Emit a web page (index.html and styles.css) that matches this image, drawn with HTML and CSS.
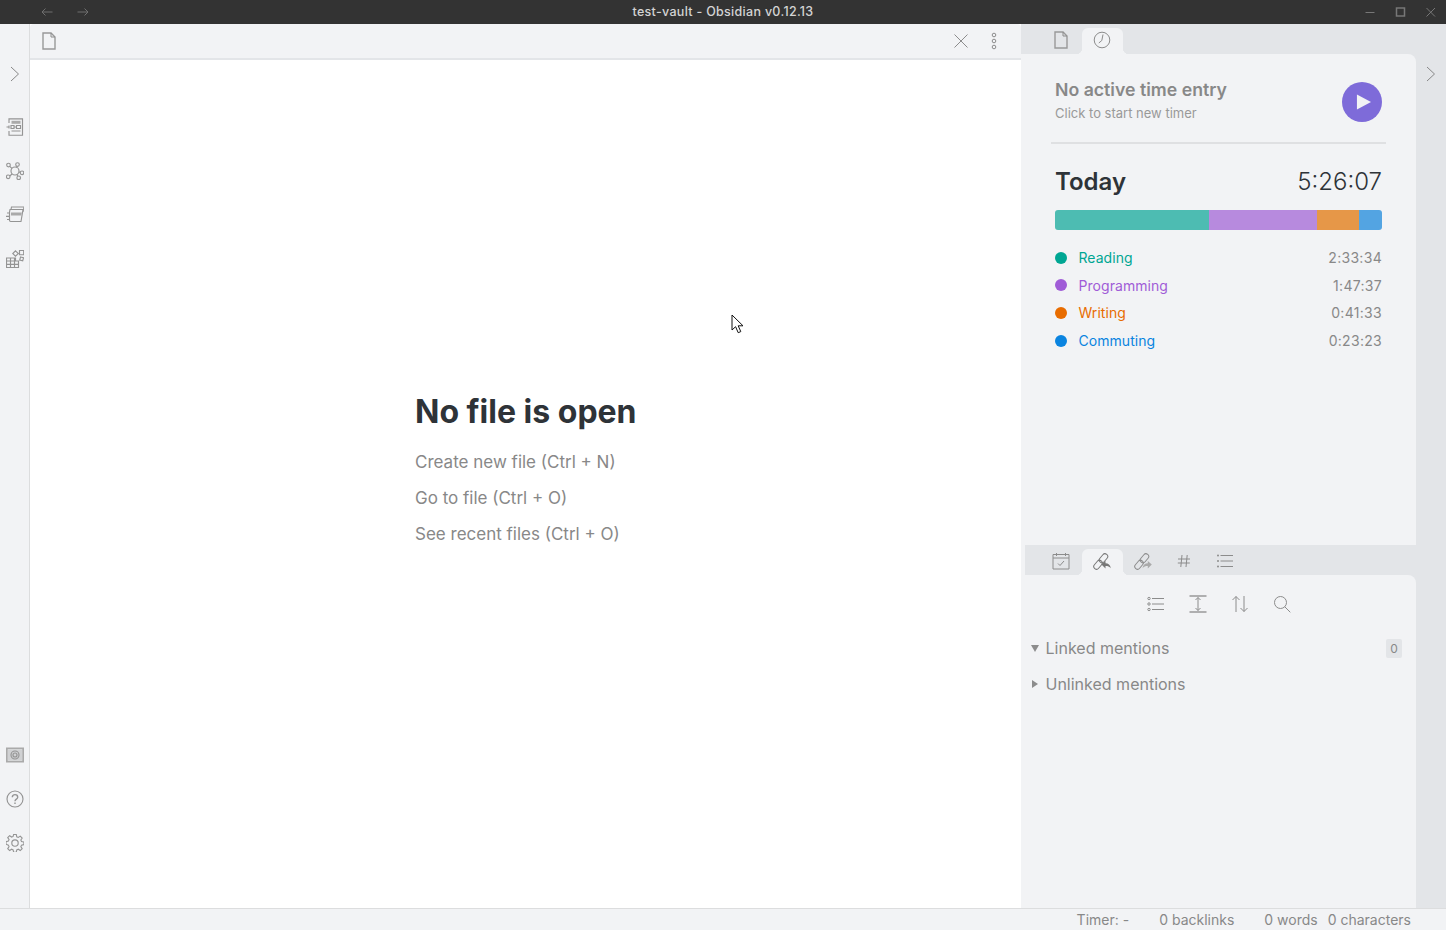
FILE: index.html
```html
<!DOCTYPE html>
<html lang="en">
<head>
    <meta charset="UTF-8">
    <title>test-vault - Obsidian v0.12.13</title>
    <link rel="stylesheet" href="styles.css">
</head>
<body>
<div class="app">
    <div class="titlebar">
        <div class="nav-arrows">
            <svg class="arrow-icon" viewBox="0 0 12 10"><path d="M11.500 5H1M4.500 1.500L1 5l3.500 3.500"/></svg>
            <svg class="arrow-icon" viewBox="0 0 12 10"><path d="M.500 5H11M7.500 1.500L11 5 7.500 8.500"/></svg>
        </div>
        <div class="window-title">test-vault - Obsidian v0.12.13</div>
        <div class="window-btns">
            <svg class="win-icon" viewBox="0 0 12 12"><path d="M.500 6.500h9"/></svg>
            <svg class="win-icon" viewBox="0 0 12 12"><path class="thick" d="M1.500 2h8v8h-8z"/></svg>
            <svg class="win-icon" viewBox="0 0 12 12"><path d="M1.500 2l8.500 8.500M10 2l-8.500 8.500"/></svg>
        </div>
    </div>

    <div class="workspace">
        <div class="ribbon">
            <svg class="ribbon-chevron" viewBox="0 0 18 18"><path d="M5 2l7.500 7L5 16"/></svg>
            <div class="ribbon-actions">
                <div class="ribbon-btn">
                    <svg class="icon" viewBox="0 0 18 18">
                        <path d="M3 5V.800h13.500v16.400H3V13"/>
                        <path class="solid" d="M5.500 2.800h9v3h-9z"/>
                        <path d="M.500 9h2.500M10.500 7.500h4v3h-4zM5 7.500h3v3H5zM3 7.500v3M8 9h2.500M5.500 13h9"/>
                    </svg>
                </div>
                <div class="ribbon-btn">
                    <svg class="icon" viewBox="0 0 18 18">
                        <circle cx="9" cy="9" r="4"/>
                        <circle cx="2.500" cy="3" r="1.800"/>
                        <circle cx="11.500" cy="2.500" r="1.800"/>
                        <circle cx="16" cy="10.800" r="1.800"/>
                        <circle cx="12.700" cy="15.800" r="1.800"/>
                        <circle cx="2.200" cy="14.800" r="1.800"/>
                        <path d="M3.700 4.300l2.500 2.300M11 4.300l-.7 1M14.300 10.400L13 10M11.800 14l-.8-1.700M3.700 14l2.400-2"/>
                    </svg>
                </div>
                <div class="ribbon-btn">
                    <svg class="icon" viewBox="0 0 18 18">
                        <path d="M5 3.500l.5-2.500H18l-1 5M3.500 6l.5-2.500h13L15 15.500H4.700a1.200 1.200 0 0 1-1.200-1.200z"/>
                        <path class="solid" d="M5 6.500h10.800l-.5 3H5z"/>
                        <path d="M1 7h2.500M0 10.300h3.500M1 13.500h2.500"/>
                    </svg>
                </div>
                <div class="ribbon-btn">
                    <svg class="icon" viewBox="0 0 18 18">
                        <path d="M.500 8h9v3h3v6.500H.500zM.500 11h12M.500 14.300h12M4.500 8v9.500M8.500 8v9.500"/>
                        <path d="M9.500 .8l2.800 2.700-2.800 2.800-2.700-2.800zM13.500 .5h4.200v4.200h-4.200zM14.500 7l3 .8-.8 3-3-.8z"/>
                    </svg>
                </div>
            </div>
            <div class="ribbon-actions ribbon-bottom">
                <div class="ribbon-btn">
                    <svg class="icon" viewBox="0 0 18 18">
                        <path class="solid" d="M0 1.500h18v15H0zM1.800 3.300v11.400h14.400V3.300z" fill-rule="evenodd"/>
                        <path class="pale" d="M1.800 3.300h14.400v11.400H1.800z"/>
                        <circle cx="9" cy="9" r="4"/>
                        <circle cx="9" cy="9" r="2"/>
                    </svg>
                </div>
                <div class="ribbon-btn">
                    <svg class="icon" viewBox="0 0 18 18">
                        <circle cx="9" cy="9" r="8"/>
                        <path class="bold" d="M6.300 7.200c0-3.500 5.400-3.500 5.400 0 0 2-2.700 1.800-2.700 4"/>
                        <path class="bold" d="M9 12.600v1.500"/>
                    </svg>
                </div>
                <div class="ribbon-btn">
                    <svg class="icon" viewBox="0 0 18 18">
                        <path d="M7.600 0h2.800l.5 2.500 1.600.7 2.100-1.400 2 2-1.400 2.100.7 1.600 2.500.5v2.800l-2.500.5-.7 1.600 1.400 2.100-2 2-2.100-1.400-1.600.7-.5 2.500H7.600l-.5-2.500-1.600-.7-2.100 1.400-2-2 1.400-2.100-.7-1.600L-.4 10.400V7.600l2.500-.5.7-1.600-1.400-2.100 2-2 2.100 1.400 1.600-.7z" transform="translate(.4 .4) scale(.95)"/>
                        <circle cx="9" cy="9" r="3.200"/>
                    </svg>
                </div>
            </div>
        </div>

        <div class="main">
            <div class="view-header">
                <svg class="icon file-icon" viewBox="0 0 16 18"><path class="thick" d="M2 1h8l4 4v12H2z"/><path d="M10 1v4h4"/></svg>
                <div class="view-actions">
                    <svg class="icon" viewBox="0 0 18 18"><path d="M2.500 2.500l13 13M15.500 2.500l-13 13"/></svg>
                    <svg class="icon" viewBox="0 0 18 18"><circle cx="9" cy="3" r="1.800"/><circle cx="9" cy="9" r="1.800"/><circle cx="9" cy="15" r="1.800"/></svg>
                </div>
            </div>
            <div class="empty-state">
                <div class="empty-box">
                    <h1 class="empty-title">No file is open</h1>
                    <div class="empty-action">Create new file (Ctrl + N)</div>
                    <div class="empty-action">Go to file (Ctrl + O)</div>
                    <div class="empty-action">See recent files (Ctrl + O)</div>
                </div>
            </div>
        </div>

        <div class="side-dock">
            <div class="side-panes">
                <div class="pane pane-top">
                    <div class="tab-strip">
                        <div class="tab">
                            <svg class="icon file-small" viewBox="0 0 16 18"><path class="thick" d="M2 1h8l4 4v12H2z"/><path d="M10 1v4h4"/></svg>
                        </div>
                        <div class="tab active">
                            <svg class="icon" viewBox="0 0 18 18"><circle cx="9" cy="9" r="7.800"/><path d="M10 3.500L8.800 9.500 5.800 12"/></svg>
                        </div>
                    </div>
                    <div class="pane-body timer-view">
                        <div class="timer-head">
                            <div class="timer-text">
                                <div class="timer-title">No active time entry</div>
                                <div class="timer-sub">Click to start new timer</div>
                            </div>
                            <div class="play-btn">
                                <svg class="play-icon" viewBox="0 0 16 16"><path d="M1 0l15 8-15 8z"/></svg>
                            </div>
                        </div>
                        <div class="today-row">
                            <div class="today-label">Today</div>
                            <div class="today-total">5:26:07</div>
                        </div>
                        <div class="stack-bar">
                            <div class="seg seg-reading" style="width: 47.09%"></div>
                            <div class="seg seg-programming" style="width: 33.00%"></div>
                            <div class="seg seg-writing" style="width: 12.74%"></div>
                            <div class="seg seg-commuting" style="width: 7.17%"></div>
                        </div>
                        <ul class="entry-list">
                            <li class="entry c-reading"><span class="dot"></span><span class="entry-name">Reading</span><span class="entry-time">2:33:34</span></li>
                            <li class="entry c-programming"><span class="dot"></span><span class="entry-name">Programming</span><span class="entry-time">1:47:37</span></li>
                            <li class="entry c-writing"><span class="dot"></span><span class="entry-name">Writing</span><span class="entry-time">0:41:33</span></li>
                            <li class="entry c-commuting"><span class="dot"></span><span class="entry-name">Commuting</span><span class="entry-time">0:23:23</span></li>
                        </ul>
                    </div>
                </div>

                <div class="pane pane-bottom">
                    <div class="tab-strip strip-inset">
                        <div class="tab">
                            <svg class="icon" viewBox="0 0 18 18"><path d="M1 2.500h16v14.500H1zM1 6h16M4.500 1v3M13.500 1v3M6 11.500l2 2 4-4.500"/></svg>
                        </div>
                        <div class="tab active">
                            <svg class="icon icon-dark" viewBox="0 0 18 18">
                                <rect x="0" y="10" width="10" height="5.500" rx="2.700" transform="rotate(-50 5 12.750)"/>
                                <rect x="5.500" y="3.500" width="10" height="5.500" rx="2.700" transform="rotate(-50 10.500 6.250)"/>
                                <path class="solid" d="M8.500 12.500l4-3.500v2.300c2.800 0 4.800 1.500 5.300 5-1.200-1.800-3-2.300-5.300-2.300V16.500z"/>
                            </svg>
                        </div>
                        <div class="tab">
                            <svg class="icon" viewBox="0 0 18 18">
                                <rect x="0" y="10" width="10" height="5.500" rx="2.700" transform="rotate(-50 5 12.750)"/>
                                <rect x="5.500" y="3.500" width="10" height="5.500" rx="2.700" transform="rotate(-50 10.500 6.250)"/>
                                <path class="solid" d="M17.800 12.500l-4-3.500v2.300c-2.800 0-4.800 1.500-5.300 5 1.200-1.800 3-2.300 5.300-2.300v2.500z"/>
                            </svg>
                        </div>
                        <div class="tab">
                            <svg class="icon" viewBox="0 0 18 18"><path d="M7 3l-1.200 12M12.200 3L11 15M3 7h12M2.800 11h12"/></svg>
                        </div>
                        <div class="tab">
                            <svg class="icon" viewBox="0 0 18 18"><path d="M4.500 3.500h12.500M4.500 9h12.500M4.500 14.500h12.500"/><circle class="dot-fill" cx="2" cy="3.500" r="1"/><circle class="dot-fill" cx="2" cy="9" r="1"/><circle class="dot-fill" cx="2" cy="14.500" r="1"/></svg>
                        </div>
                    </div>
                    <div class="pane-body backlinks">
                        <div class="bl-toolbar">
                            <svg class="icon" viewBox="0 0 18 18"><path d="M5 3.500h12M5 9h12M5 14.500h12"/><circle cx="2" cy="3.500" r="1.200"/><circle cx="2" cy="9" r="1.200"/><circle cx="2" cy="14.500" r="1.200"/></svg>
                            <svg class="icon" viewBox="0 0 18 18"><path class="thick" d="M.500 1h17M.500 17h17"/><path d="M9 2.500v13M6.500 5L9 2.500 11.500 5M6.500 13L9 15.500l2.500-2.500"/></svg>
                            <svg class="icon" viewBox="0 0 18 18"><path d="M5 17V1.500M1.500 5L5 1.500 8.500 5M13 1v15.500M9.500 13l3.500 3.500 3.500-3.500"/></svg>
                            <svg class="icon" viewBox="0 0 18 18"><circle cx="7.500" cy="7.500" r="6"/><path d="M11.800 11.800l5.500 5.500"/></svg>
                        </div>
                        <div class="bl-row">
                            <span class="caret caret-down"></span>
                            <span class="bl-name">Linked mentions</span>
                            <span class="bl-count">0</span>
                        </div>
                        <div class="bl-row">
                            <span class="caret caret-right"></span>
                            <span class="bl-name">Unlinked mentions</span>
                        </div>
                    </div>
                </div>
            </div>
            <div class="dock-edge">
                <svg class="ribbon-chevron" viewBox="0 0 18 18"><path d="M5 2l7.500 7L5 16"/></svg>
            </div>
        </div>
    </div>

    <div class="statusbar">
        <span class="status-item">Timer: -</span>
        <span class="status-item">0 backlinks</span>
        <span class="status-item">0 words</span>
        <span class="status-item status-tight">0 characters</span>
    </div>

    <svg class="cursor" viewBox="0 0 14 20"><path d="M1 1v15l3.600-3.300 2.600 6 2.600-1.100-2.600-5.800H12z"/></svg>
</div>
</body>
</html>
```

FILE: styles.css
```css
*{padding: 0;margin: 0;box-sizing: border-box;}
html, body{height: 100%;overflow: hidden;}
body{
    font-family: Inter, "Noto Sans", "Liberation Sans", sans-serif;
    color: #888;
    background: #f2f3f5;
}
ul{list-style-type: none;}
svg{display: block;flex: none;}

.app{
    position: relative;
    display: flex;
    flex-direction: column;
    height: 930px;
}

/* title bar */
.titlebar{
    display: flex;
    align-items: center;
    position: relative;
    height: 24px;
    flex: none;
    background: #333;
}
.nav-arrows{
    display: flex;
    gap: 24px;
    padding-left: 41px;
}
.arrow-icon{
    width: 12px;
    height: 10px;
    fill: none;
    stroke: #6f6f6f;
    stroke-width: 1;
}
.window-title{
    position: absolute;
    left: 0;
    right: 0;
    margin-top: -1px;
    text-align: center;
    font-size: 12.500px;
    font-weight: 500;
    letter-spacing: .3px;
    color: #d4d4d4;
}
.window-btns{
    display: flex;
    gap: 18px;
    margin-left: auto;
    padding-right: 9px;
}
.win-icon{
    width: 12px;
    height: 12px;
    fill: none;
    stroke: #777;
    stroke-width: 1;
}
.win-icon .thick{stroke-width: 1.500;}

/* shared icon look */
.icon{
    width: 18px;
    height: 18px;
    fill: none;
    stroke: #8c8c8c;
    stroke-width: 1;
}
.icon .thick{stroke-width: 1.400;stroke: #999;}
.icon .bold{stroke-width: 1.400;}
.icon .solid{fill: #aaa;stroke: none;}
.icon .pale{fill: #d0d1d3;stroke: none;}
.icon .dot-fill{fill: #8c8c8c;stroke: none;}
.icon-dark{stroke: #777;}
.icon-dark .solid{fill: #777;}

.workspace{
    display: flex;
    flex: 1;
    min-height: 0;
    background: #f2f3f5;
}

/* left ribbon */
.ribbon{
    display: flex;
    flex-direction: column;
    align-items: center;
    width: 30px;
    flex: none;
    padding: 41px 0 43px;
    border-right: 1px solid #dcddde;
}
.ribbon .icon{stroke: #949494;stroke-width: 1.150;}
.ribbon-chevron{
    width: 18px;
    height: 18px;
    fill: none;
    stroke: #888;
    stroke-width: 1;
}
.ribbon-actions{
    display: flex;
    flex-direction: column;
    margin-top: 22px;
}
.ribbon-bottom{margin-top: auto;}
.ribbon-btn{
    display: flex;
    align-items: center;
    justify-content: center;
    width: 29px;
    height: 44px;
}

/* main view */
.main{
    display: flex;
    flex-direction: column;
    width: 991px;
    flex: none;
    background: #fff;
}
.view-header{
    display: flex;
    align-items: center;
    height: 36px;
    flex: none;
    padding: 0 18px 0 11px;
    background: #f2f3f5;
    border-bottom: 2px solid #e3e5e8;
    border-radius: 4px 4px 0 0;
}
.file-icon{width: 16px;}
.view-actions{
    display: flex;
    gap: 15px;
    margin-left: auto;
}
.empty-state{
    display: flex;
    align-items: center;
    justify-content: center;
    flex: 1;
    padding-bottom: 18px;
}
.empty-box{width: 221px;}
.empty-title{
    font-size: 32px;
    line-height: 40px;
    font-weight: 700;
    color: #2e3338;
    white-space: nowrap;
    margin-bottom: 18px;
}
.empty-action{
    font-size: 17px;
    line-height: 24px;
    margin-bottom: 12px;
    color: #888;
    white-space: nowrap;
}

/* right dock */
.side-dock{
    display: flex;
    flex: 1;
    min-width: 0;
    background: #e3e5e8;
}
.side-panes{
    display: flex;
    flex-direction: column;
    width: 395px;
    flex: none;
}
.pane{
    display: flex;
    flex-direction: column;
}
.pane-top{height: 521px;flex: none;}
.pane-bottom{flex: 1;min-height: 0;}
.dock-edge{
    flex: 1;
    padding: 41px 0 0 6px;
}
.tab-strip{
    display: flex;
    align-items: flex-end;
    height: 30px;
    flex: none;
    padding-left: 20px;
    background: #e3e5e8;
}
.strip-inset{
    padding-left: 16px;
    border-left: 4px solid #f2f3f5;
}
.tab{
    position: relative;
    display: flex;
    align-items: center;
    justify-content: center;
    width: 41px;
    height: 26px;
    padding: 0 1px 2px 0;
    border-radius: 6px 6px 0 0;
}
.tab.active{background: #f2f3f5;}
.tab.active::before,
.tab.active::after{
    content: "";
    position: absolute;
    bottom: 0;
    width: 6px;
    height: 6px;
}
.tab.active::before{
    left: -6px;
    background: radial-gradient(circle at 0 0, transparent 6px, #f2f3f5 6.500px);
}
.tab.active::after{
    right: -6px;
    background: radial-gradient(circle at 100% 0, transparent 6px, #f2f3f5 6.500px);
}
.file-small{width: 16px;}
.pane-body{
    flex: 1;
    min-height: 0;
    background: #f2f3f5;
    border-top-right-radius: 8px;
}

/* timer */
.timer-view{padding: 0 34px 0 34px;}
.timer-head{
    display: flex;
    justify-content: space-between;
    align-items: center;
    height: 90px;
    margin: 0 -4px;
    padding: 14px 4px 6px;
    border-bottom: 2px solid #dfe0e2;
}
.timer-text{margin-bottom: 4px;}
.timer-title{
    font-size: 17.700px;
    line-height: 24px;
    font-weight: 600;
    color: #888;
}
.timer-sub{
    font-size: 13px;
    line-height: 18px;
    margin-top: 2px;
    color: #999;
}
.play-btn{
    display: flex;
    align-items: center;
    justify-content: center;
    width: 40px;
    height: 40px;
    border-radius: 50%;
    background: #7e6bd9;
}
.play-icon{
    width: 15px;
    height: 16px;
    margin-left: 2px;
    fill: #f2f3f5;
}
.today-row{
    display: flex;
    justify-content: space-between;
    align-items: center;
    height: 34px;
    margin-top: 20px;
}
.today-label{
    font-size: 24px;
    font-weight: 600;
    color: #2e3338;
}
.today-total{
    font-size: 24px;
    font-weight: 300;
    color: #2e3338;
}
.stack-bar{
    display: flex;
    height: 20px;
    margin-top: 12px;
    border-radius: 3px;
    overflow: hidden;
}
.seg-reading{background: #4dbcb2;}
.seg-programming{background: #b78ade;}
.seg-writing{background: #e69748;}
.seg-commuting{background: #53a4e2;}
.entry-list{margin-top: 14px;}
.entry{
    display: flex;
    align-items: center;
    height: 27.600px;
    font-size: 14px;
}
.dot{
    width: 12px;
    height: 12px;
    border-radius: 50%;
    margin-right: 11.500px;
}
.entry-name{letter-spacing: .05px;}
.entry-time{
    margin-left: auto;
    letter-spacing: .3px;
    color: #888;
}
.c-reading{color: #00a693;}
.c-reading .dot{background: #00a693;}
.c-programming{color: #a05cd7;}
.c-programming .dot{background: #a05cd7;}
.c-writing{color: #e86c00;}
.c-writing .dot{background: #e86c00;}
.c-commuting{color: #0a84e0;}
.c-commuting .dot{background: #0a84e0;}

/* backlinks */
.backlinks{padding: 0 14px 0 10px;}
.bl-toolbar{
    display: flex;
    justify-content: center;
    gap: 24px;
    height: 55px;
    padding: 20px 0 0 4px;
}
.bl-row{
    display: flex;
    align-items: center;
    height: 36px;
    font-size: 16px;
    color: #888;
}
.caret{
    width: 0;
    height: 0;
    margin-right: 6.500px;
}
.caret-down{
    border-left: 4px solid transparent;
    border-right: 4px solid transparent;
    border-top: 7px solid #8c8c8c;
}
.caret-right{
    margin-left: 1px;
    margin-right: 7.500px;
    border-top: 4px solid transparent;
    border-bottom: 4px solid transparent;
    border-left: 6px solid #8c8c8c;
}
.bl-count{
    display: flex;
    align-items: center;
    justify-content: center;
    width: 16px;
    height: 19px;
    margin-left: auto;
    font-size: 12px;
    border-radius: 2px;
    background: #e3e5e8;
}

/* status bar */
.statusbar{
    display: flex;
    justify-content: flex-end;
    align-items: center;
    height: 22px;
    flex: none;
    padding: 0 35px 0 0;
    border-top: 1px solid #dcddde;
    background: #f2f3f5;
    font-size: 14px;
    color: #888;
}
.status-item{margin-left: 30px;}
.status-tight{margin-left: 10px;}

.cursor{
    position: absolute;
    left: 731px;
    top: 314px;
    width: 14px;
    height: 20px;
    fill: #fff;
    stroke: #111;
    stroke-width: 1;
}
```
